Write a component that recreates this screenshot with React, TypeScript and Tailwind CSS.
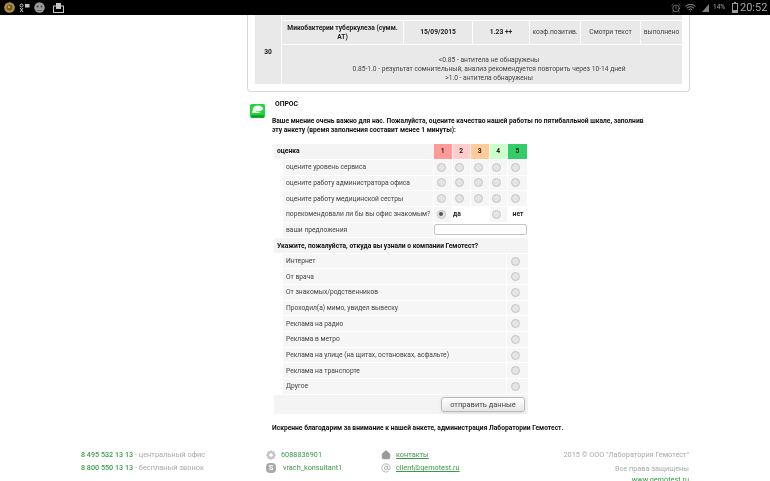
import { Home, AtSign, Wifi, AlarmClock } from "lucide-react";

const scaleCells = [
  { label: "1", color: "bg-[#ff9a9a] w-[17.5px]" },
  { label: "2", color: "bg-[#ffcccc] w-[17.5px]" },
  { label: "3", color: "bg-[#ffcc99] w-[17.5px]" },
  { label: "4", color: "bg-[#ccffcc] w-[17.5px]" },
  { label: "5", color: "bg-[#33cc66] w-[19px]" },
];

const ratingRows = [
  "оцените уровень сервиса",
  "оцените работу администратора офиса",
  "оцените работу медицинской сестры",
];

const sources = [
  "Интернет",
  "От врача",
  "От знакомых/родственников",
  "Проходил(а) мимо, увидел вывеску",
  "Реклама на радио",
  "Реклама в метро",
  "Реклама на улице (на щитах, остановках, асфальте)",
  "Реклама на транспорте",
  "Другое",
];

const colWidths = ["w-[17.5px]", "w-[17.5px]", "w-[17.5px]", "w-[17.5px]", "w-[19px]"];

function Radio({ checked = false }: { checked?: boolean }) {
  return (
    <span className="flex h-[9px] w-[9px] items-center justify-center rounded-full border border-[#c4c4c4] bg-[#e4e4e4]">
      {checked && <span className="h-[4px] w-[4px] rounded-full bg-[#555]" />}
    </span>
  );
}

function LeftStatusIcons() {
  return (
    <div className="flex items-center gap-[4px]">
      <svg width="11" height="11" viewBox="0 0 11 11">
        <circle cx="5.5" cy="5.5" r="5.3" fill="#b08f45" />
        <circle cx="5.5" cy="5.5" r="3" fill="#6d5b2c" />
        <circle cx="5" cy="5" r="1.2" fill="#c7a860" />
      </svg>
      <svg width="11" height="10" viewBox="0 0 11 10" fill="none" stroke="#c2c2c2" strokeWidth="1">
        <circle cx="2.5" cy="2.5" r="1.5" />
        <path d="M1 9l3-4M4 9L1 5" />
        <rect x="6" y="1" width="4.5" height="3.5" fill="#c2c2c2" stroke="none" />
      </svg>
      <svg width="11" height="11" viewBox="0 0 11 11">
        <circle cx="5.5" cy="5.5" r="5.2" fill="#9b9b9b" />
        <circle cx="3.6" cy="4.4" r="1" fill="#444" />
        <circle cx="7.4" cy="4.4" r="1" fill="#444" />
        <path d="M3 8.5h5" stroke="#555" strokeWidth="0.8" />
      </svg>
      <svg width="11" height="10" viewBox="0 0 11 10" fill="none" stroke="#c8c8c8" strokeWidth="1" className="ml-[4px]">
        <rect x="0.5" y="3" width="10" height="6.5" />
        <rect x="3.5" y="0.5" width="4" height="5" fill="#c8c8c8" />
      </svg>
    </div>
  );
}

function RightStatusIcons() {
  return (
    <div className="flex items-center text-[#a6a6a6]">
      <AlarmClock size={10} strokeWidth={1.5} />
      <Wifi size={11} strokeWidth={2} className="ml-[4px]" />
      <svg width="7" height="8" viewBox="0 0 7 8" className="ml-[6px]">
        <path d="M0 8L7 0v8z" fill="#7d7d7d" />
      </svg>
      <span className="ml-[4px] w-[13px] text-[6.5px] leading-none">14%</span>
      <svg width="6" height="11" viewBox="0 0 6 11" className="ml-[6px]">
        <rect x="0.5" y="1.5" width="5" height="9" fill="none" stroke="#9a9a9a" />
        <rect x="2" y="0" width="2" height="1.5" fill="#9a9a9a" />
        <rect x="1" y="8" width="4" height="2" fill="#9a9a9a" />
      </svg>
      <span className="ml-[2px] w-[27px] text-[11px] leading-none">20:52</span>
    </div>
  );
}

function StatusBar() {
  return (
    <div className="flex h-[15px] shrink-0 items-center justify-between bg-black pl-[4px] pr-[3px]">
      <LeftStatusIcons />
      <RightStatusIcons />
    </div>
  );
}

function ResultsPanel() {
  return (
    <div className="ml-[247px] h-[77px] w-[443px] shrink-0 rounded-b-[4px] border border-t-0 border-[#d8d8d8] px-[7px]">
      <div className="flex h-[69px] gap-[1px] text-[6.7px] text-[#444]">
        <div className="flex w-[26px] items-center justify-center bg-[#e9e9e9] pt-[6px] font-bold text-[#222]">30</div>
        <div className="flex flex-1 flex-col gap-[1px]">
          <div className="h-[5px] bg-[#ececec]" />
          <div className="flex h-[23px] gap-[1px] text-center">
            <div className="flex w-[121px] items-center justify-center bg-[#e9e9e9] font-bold leading-[9px] text-[#222]">
              Микобактерии туберкулеза (сумм. АТ)
            </div>
            <div className="flex w-[68px] items-center justify-center bg-[#e9e9e9] font-bold text-[#222]">15/09/2015</div>
            <div className="flex w-[56px] items-center justify-center bg-[#e9e9e9] font-bold text-[#222]">1.23 ++</div>
            <div className="flex w-[50px] items-center justify-center bg-[#e9e9e9]">коэф.позитив.</div>
            <div className="flex w-[59px] items-center justify-center bg-[#e9e9e9]">Смотри текст</div>
            <div className="flex flex-1 items-center justify-center bg-[#e9e9e9]">выполнено</div>
          </div>
          <div className="flex flex-1 flex-col items-center justify-center bg-[#e9e9e9] pl-[14px] pt-[10px] text-center leading-[9.3px]">
            <span>&lt;0.85 - антитела не обнаружены</span>
            <span>0.85-1.0 - результат сомнительный, анализ рекомендуется повторить через 10-14 дней</span>
            <span>&gt;1.0 - антитела обнаружены</span>
          </div>
        </div>
      </div>
    </div>
  );
}

function Survey() {
  return (
    <div className="ml-[250px] mt-[8px] flex shrink-0 flex-col">
      <div className="flex h-[16.5px] items-start gap-[10px]">
        <svg width="15" height="15" viewBox="0 0 15 15" className="mt-[3px] shrink-0">
          <path d="M2 1h11a2 2 0 0 1 2 2v10a2 2 0 0 1-2 2H2a2 2 0 0 1-2-2V3a2 2 0 0 1 2-2z" fill="#1ed53a" />
          <ellipse cx="8" cy="5.5" rx="5" ry="3" fill="#fff" />
          <path d="M3 6l-1 4h10c-3-.5-7-1-9-4z" fill="#fff" />
          <path d="M1 12h13v1.5a1.5 1.5 0 0 1-1.5 1.5h-10A1.5 1.5 0 0 1 1 13.5z" fill="#12a92a" />
        </svg>
        <span className="text-[6.8px] font-bold leading-[9px] text-[#111]">ОПРОС</span>
      </div>
      <p className="ml-[22px] w-[372px] text-[6.7px] font-bold leading-[9px] text-[#111]">
        Ваше мнение очень важно для нас. Пожалуйста, оцените качество нашей работы по пятибалльной шкале, заполнив эту анкету (время заполнения составит менее 1 минуты):
      </p>

      <div className="ml-[24px] mt-[9.5px] flex w-[254px] flex-col gap-[1px] text-[6.7px] text-[#444]">
        <div className="flex h-[15px] bg-[#f4f4f4]">
          <div className="flex w-[160px] items-center pl-[3px] font-bold text-[#111]">оценка</div>
          <div className="flex gap-[1px]">
            {scaleCells.map((c) => (
              <div key={c.label} className={`flex items-center justify-center font-bold text-[#222] ${c.color}`}>
                {c.label}
              </div>
            ))}
          </div>
        </div>

        {ratingRows.map((row) => (
          <div key={row} className="ml-[9px] flex h-[14.67px] gap-[1px]">
            <div className="flex w-[150px] items-center bg-[#f6f6f6] pl-[3px]">{row}</div>
            <div className="flex gap-[1px]">
              {colWidths.map((w, i) => (
                <div key={i} className={`flex items-center bg-[#f6f6f6] pl-[2.5px] ${w}`}>
                  <Radio />
                </div>
              ))}
            </div>
          </div>
        ))}

        <div className="ml-[9px] flex h-[14.67px] gap-[1px]">
          <div className="flex w-[150px] items-center bg-[#f6f6f6] pl-[3px]">порекомендовали ли бы вы офис знакомым?</div>
          <div className="flex w-[17.5px] items-center bg-[#f6f6f6] pl-[2.5px]">
            <Radio checked />
          </div>
          <div className="flex w-[36px] items-center pl-[0.5px] font-bold text-[#222]">да</div>
          <div className="flex w-[17.5px] items-center bg-[#f6f6f6] pl-[2.5px]">
            <Radio />
          </div>
          <div className="flex flex-1 items-center justify-center font-bold text-[#222]">нет</div>
        </div>

        <div className="ml-[9px] flex h-[14.67px] gap-[1px]">
          <div className="flex w-[150px] items-center bg-[#f6f6f6] pl-[3px]">ваши предложения</div>
          <div className="h-[11px] w-[93px] self-center rounded-[2px] border border-[#c4c4c4] bg-white" />
        </div>

        <div className="flex h-[14.5px] items-center bg-[#f4f4f4] pl-[3px] font-bold text-[#111]">
          Укажите, пожалуйста, откуда вы узнали о компании Гемотест?
        </div>

        {sources.map((row) => (
          <div key={row} className="ml-[9px] flex h-[14.67px] gap-[1px]">
            <div className="flex w-[223px] items-center bg-[#f6f6f6] pl-[3px]">{row}</div>
            <div className="flex flex-1 items-center bg-[#f6f6f6] pl-[3.5px]">
              <Radio />
            </div>
          </div>
        ))}

        <div className="flex h-[19px] items-center justify-end bg-[#f4f4f4] pr-[3px]">
          <button className="h-[15px] w-[84px] rounded-[3px] border border-[#bbb] bg-gradient-to-b from-white to-[#e6e6e6] text-[7.5px] text-[#444] shadow-sm">
            отправить данные
          </button>
        </div>
      </div>

      <p className="ml-[22px] mt-[10.5px] text-[6.7px] font-bold leading-[9px] text-[#111]">
        Искренне благодарим за внимание к нашей анкете, администрация Лаборатории Гемотест.
      </p>
    </div>
  );
}

function Footer() {
  return (
    <div className="mt-[15.5px] flex h-[32px] shrink-0 text-[7.4px] leading-[12px] text-[#aaa]">
      <div className="ml-[81px] flex w-[185px] flex-col gap-[1px]">
        <div>
          <span className="text-[7.2px] font-medium text-[#3a9a4a]">8 495 532 13 13</span> - центральный офис
        </div>
        <div>
          <span className="text-[7.2px] font-medium text-[#3a9a4a]">8 800 550 13 13</span> - беспланый звонок
        </div>
      </div>
      <div className="flex w-[115px] flex-col gap-[1px] pt-[0.5px] text-[7.3px] text-[#3a9a4a]">
        <div className="flex h-[12px] items-center gap-[5px]">
          <svg width="10" height="10" viewBox="0 0 10 10" fill="#c4c4c4">
            <circle cx="5" cy="1.8" r="1.6" />
            <circle cx="5" cy="8.2" r="1.6" />
            <circle cx="1.8" cy="5" r="1.6" />
            <circle cx="8.2" cy="5" r="1.6" />
            <circle cx="2.7" cy="2.7" r="1.5" />
            <circle cx="7.3" cy="2.7" r="1.5" />
            <circle cx="2.7" cy="7.3" r="1.5" />
            <circle cx="7.3" cy="7.3" r="1.5" />
          </svg>
          <span>6088836901</span>
        </div>
        <div className="flex h-[12px] items-center gap-[7px]">
          <span className="flex h-[10px] w-[10px] items-center justify-center rounded-[4px] bg-[#aaa] text-[7.5px] font-bold text-white">S</span>
          <span>vrach_konsultant1</span>
        </div>
      </div>
      <div className="flex w-[100px] flex-col gap-[1px] pt-[0.5px] text-[7.3px] text-[#3a9a4a]">
        <div className="flex h-[12px] items-center gap-[5px]">
          <Home size={10} className="text-[#999]" fill="#999" />
          <span className="underline">контакты</span>
        </div>
        <div className="flex h-[12px] items-center gap-[5px]">
          <AtSign size={10} className="text-[#aaa]" />
          <span className="underline">client@gemotest.ru</span>
        </div>
      </div>
      <div className="flex w-[208px] flex-col items-end gap-[2px] text-[7.3px]">
        <span>2015 © ООО "Лаборатория Гемотест"</span>
        <span>Все права защищены</span>
        <span className="-mt-[3px] text-[#2f9e44]">www.gemotest.ru</span>
      </div>
    </div>
  );
}

export default function App() {
  return (
    <div className="flex h-[481px] w-[770px] flex-col overflow-hidden bg-white font-['Roboto',sans-serif] blur-[0.3px]">
      <StatusBar />
      <ResultsPanel />
      <Survey />
      <Footer />
    </div>
  );
}
